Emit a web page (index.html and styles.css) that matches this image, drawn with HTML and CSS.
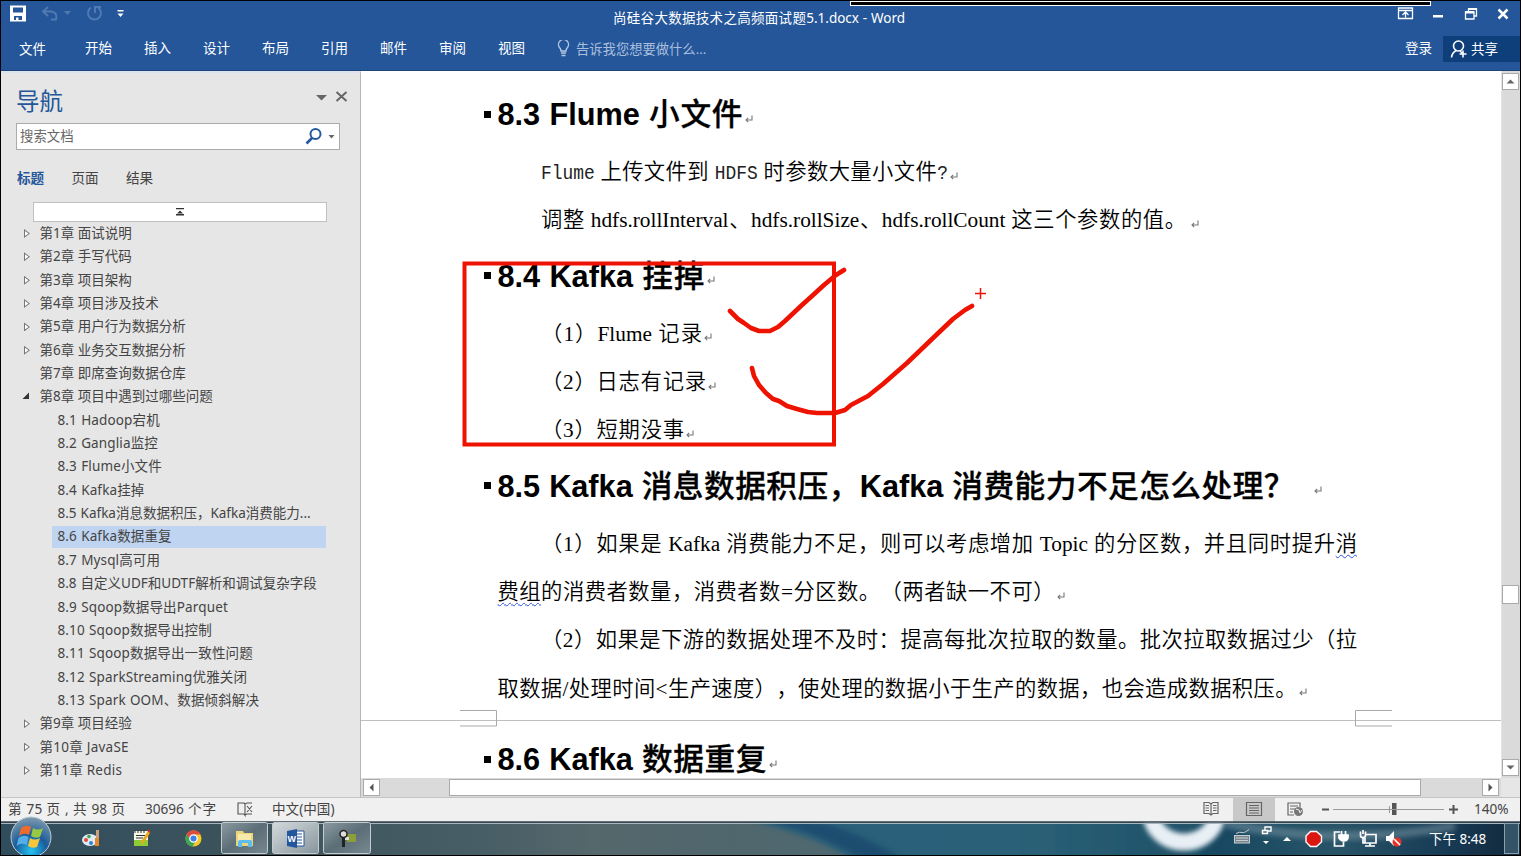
FILE: index.html
```html
<!DOCTYPE html>
<html lang="zh-CN">
<head>
<meta charset="utf-8">
<title>尚硅谷大数据技术之高频面试题5.1.docx - Word</title>
<link rel="stylesheet" href="styles.css">
</head>
<body>
<svg class="defs" width="0" height="0">
  <symbol id="ret" viewBox="0 0 10 10"><path d="M8 1.5V6H2M4.2 3.8 2 6l2.2 2.2" fill="none" stroke="#777" stroke-width="1.1"/></symbol>
</svg>
<div class="app">
  <header class="ribbon">
    <div class="recbar"></div>
    <div class="titlebar">
      <svg class="quick" width="130" height="26" viewBox="0 0 130 26">
        <path d="M9 4.500h16v16H9z" fill="#fff"/><path d="M12 6.500h10v5H12zM13 15h8v4h-8z" fill="#245699"/><path d="M15 16.500h2.500V19H15z" fill="#fff"/>
        <g fill="none" stroke="#5079b3" stroke-width="2"><path d="M47 6l-5 4.500 5 4.500M43 10.500h7q7 1 5 8h-5"/><path d="M97 6.500a6.500 6.500 0 1 1-7 0M94 12V6h6" /></g>
        <path d="M63 10h7l-3.500 4z" fill="#5079b3"/><path d="M116.500 9h6v1.500h-6zM116.500 12.500h6l-3 3.500z" fill="#fff"/>
      </svg>
      <div class="doc-title">尚硅谷大数据技术之高频面试题5.1.docx - Word</div>
      <svg class="winbtns" width="130" height="26" viewBox="1390 0 130 26">
        <g fill="none" stroke="#fff" stroke-width="1.300"><path d="M1398.500 7h14v10.500h-14zM1398.500 9.500h14M1405.500 16.500v-5M1402.500 14l3-3 3 3"/><path d="M1468.500 10.500V8h8v7h-2M1465.500 11h8.500v7h-8.500z"/></g>
        <path d="M1433 14h10v2.500h-10z" fill="#fff"/><path d="M1465 10h9v2.500h-9zM1468 7h9v2h-9z" fill="#fff"/>
        <path d="M1498.500 8.500l9 9m0-9l-9 9" stroke="#fff" stroke-width="2.500"/>
      </svg>
    </div>
    <nav class="tabs">
      <span>文件</span><span>开始</span><span>插入</span><span>设计</span><span>布局</span><span>引用</span><span>邮件</span><span>审阅</span><span>视图</span>
      <div class="tell"><svg width="13" height="17" viewBox="0 0 13 17"><path d="M4 11Q4 9 2.500 7.500a5 5 0 1 1 8 0Q9 9 9 11zM4 13h5M4.500 15.500h4" fill="none" stroke="#b4c7e2" stroke-width="1.400"/></svg>告诉我您想要做什么...</div>
      <span class="login">登录</span>
      <div class="share"><svg width="18" height="20" viewBox="0 0 18 20"><circle cx="8.500" cy="7" r="5" fill="none" stroke="#fff" stroke-width="1.600"/><path d="M1.500 18.500q.5-5 5-7M10 12l2 2M13 11.500v7M9.500 15h7" fill="none" stroke="#fff" stroke-width="1.600"/></svg>共享</div>
    </nav>
  </header>

  <div class="work">
    <aside class="nav">
      <div class="nav-head"><h2>导航</h2>
        <svg width="34" height="14" viewBox="0 0 34 14"><path d="M1 5h11l-5.500 5.500z" fill="#666"/><path d="M21.500 2l10 9m0-9l-10 9" stroke="#666" stroke-width="2"/></svg></div>
      <div class="search"><span>搜索文档</span><svg width="32" height="20" viewBox="0 0 32 20"><circle cx="11.500" cy="7" r="5" fill="none" stroke="#2458a0" stroke-width="2"/><path d="M8 11L2.500 16.500" stroke="#2458a0" stroke-width="2.600"/><path d="M24.500 8h6l-3 3.500z" fill="#666"/></svg></div>
      <div class="nav-tabs"><b>标题</b><span>页面</span><span>结果</span></div>
      <div class="jump"><svg width="10" height="10" viewBox="0 0 10 10"><path d="M1 1h8v1.300H1zM5 3.500L8 6.500H2zM1 7h8v1.500H1z" fill="#333"/></svg></div>
      <ul class="tree">
        <li class="c">第1章 面试说明</li>
        <li class="c">第2章 手写代码</li>
        <li class="c">第3章 项目架构</li>
        <li class="c">第4章 项目涉及技术</li>
        <li class="c">第5章 用户行为数据分析</li>
        <li class="c">第6章 业务交互数据分析</li>
        <li>第7章 即席查询数据仓库</li>
        <li class="o">第8章 项目中遇到过哪些问题</li>
        <li class="s">8.1 Hadoop宕机</li>
        <li class="s">8.2 Ganglia监控</li>
        <li class="s">8.3 Flume小文件</li>
        <li class="s">8.4 Kafka挂掉</li>
        <li class="s tight">8.5 Kafka消息数据积压，Kafka消费能力...</li>
        <li class="s sel">8.6 Kafka数据重复</li>
        <li class="s">8.7 Mysql高可用</li>
        <li class="s tight">8.8 自定义UDF和UDTF解析和调试复杂字段</li>
        <li class="s">8.9 Sqoop数据导出Parquet</li>
        <li class="s">8.10 Sqoop数据导出控制</li>
        <li class="s">8.11 Sqoop数据导出一致性问题</li>
        <li class="s">8.12 SparkStreaming优雅关闭</li>
        <li class="s">8.13 Spark OOM、数据倾斜解决</li>
        <li class="c">第9章 项目经验</li>
        <li class="c js">第10章 JavaSE</li>
        <li class="c js">第11章 Redis</li>
      </ul>
    </aside>

    <div class="view">
      <main class="page">
        <h1><i></i><span class="w245">8.3 Flume <em>小文件</em></span><svg><use href="#ret"/></svg></h1>
        <p class="in"><span class="w407"><tt>Flume</tt> 上传文件到 <tt>HDFS</tt> 时参数大量小文件<tt>?</tt></span><svg><use href="#ret"/></svg></p>
        <p class="in"><span class="w645">调整 hdfs.rollInterval、hdfs.rollSize、hdfs.rollCount 这三个参数的值。</span><svg class="off"><use href="#ret"/></svg></p>
        <h1 class="g1"><i></i><span class="w207">8.4 Kafka <em>挂掉</em></span><svg><use href="#ret"/></svg></h1>
        <p class="in"><span class="w161">（1）Flume 记录</span><svg><use href="#ret"/></svg></p>
        <p class="in"><span class="w165">（2）日志有记录</span><svg><use href="#ret"/></svg></p>
        <p class="in"><span class="w143">（3）短期没事</span><svg><use href="#ret"/></svg></p>
        <h1 class="g1"><i></i><span class="w797">8.5 Kafka <em>消息数据积压，</em>Kafka <em>消费能力不足怎么处理？</em></span><svg class="far"><use href="#ret"/></svg></h1>
        <p class="in"><span class="w816">（1）如果是 Kafka 消费能力不足，则可以考虑增加 Topic 的分区数，并且同时提升<u>消</u></span></p>
        <p><span class="w557"><u>费组</u>的消费者数量，消费者数=分区数。（两者缺一不可）</span><svg><use href="#ret"/></svg></p>
        <p class="in"><span class="w816">（2）如果是下游的数据处理不及时：提高每批次拉取的数量。批次拉取数据过少（拉</span></p>
        <p><span class="w799">取数据/处理时间&lt;生产速度），使处理的数据小于生产的数据，也会造成数据积压。</span><svg><use href="#ret"/></svg></p>
        <svg class="pagebreak" width="1140" height="18" viewBox="361 710 1140 18"><path d="M361 720.500h1140" stroke="#bfbfbf"/><path d="M460 710.500h36.500v15.500H460M1392 710.500h-36.500v15.500h36.500" fill="none" stroke="#aaa"/></svg>
        <h1 class="last"><i></i><span class="w269">8.6 Kafka <em>数据重复</em></span><svg><use href="#ret"/></svg></h1>
      </main>
      <svg class="ink" width="560" height="200" viewBox="455 255 560 200"><g fill="none" stroke="#ee1200" stroke-width="4"><path d="M464.500 263.500h369.500v181H464.500z"/><g stroke-width="4.600" stroke-linecap="round" stroke-linejoin="round"><path d="M730 311l8 8 6 4 7 5 8 3h11l8-4 7-6 17-16 10-9 12-11 12-10 8-5"/><path d="M752 368l2 8 5 9 7 8 7 6 6 2 8 5 10 3 11 3 9 1h18l10-3 6-5 17-9 15-12 24-21 24-23 22-21 12-9 7-4"/></g><path d="M975 293.500h11M980.500 288v11" stroke-width="1.500"/></g></svg>
      <div class="hscroll"><span class="btn"><svg width="15" height="15" viewBox="0 0 15 15"><path d="M9.500 3.500v8L5.500 7.500z" fill="#555"/></svg></span><div class="thumb"></div><span class="btn"><svg width="15" height="15" viewBox="0 0 15 15"><path d="M5.500 3.500v8l4-4z" fill="#555"/></svg></span></div>
    </div>
    <div class="vscroll"><span class="btn"><svg width="15" height="15" viewBox="0 0 15 15"><path d="M3.500 9.500h8l-4-4z" fill="#666"/></svg></span><div class="thumb"></div><span class="btn"><svg width="15" height="15" viewBox="0 0 15 15"><path d="M3.500 5.500h8l-4 4z" fill="#666"/></svg></span></div>
  </div>

  <footer class="status">
    <span class="pg">第 75 页 , 共 98 页</span><span class="wc">30696 个字</span>
    <svg class="proof" width="17" height="16" viewBox="0 0 17 16"><path d="M7 2H1v11h6l1 1.500V3zM8 3l2-1h5M8 14l2-1h5M10 5l5 6m0-6l-5 6" fill="none" stroke="#555" stroke-width="1.100"/></svg>
    <span class="lang">中文(中国)</span>
    <svg class="views" width="265" height="24" viewBox="1195 798 265 24">
      <path d="M1232 798h42v24h-42z" fill="#c8c8c8"/>
      <g fill="none" stroke="#666" stroke-width="1.200"><path d="M1210 804l-2-1.500h-5v11h5l2 1.500 2-1.500h5v-11h-5zv11M1204.500 805.500h3.500M1204.500 808h3.500M1204.500 810.500h3.500M1212 805.500h3.500M1212 808h3.500M1212 810.500h3.500"/><path d="M1245.500 802.500h15v13h-15zM1248 805.500h10M1248 808h10M1248 810.500h10M1248 813h10"/><path d="M1293 815h-6v-12h12v4M1289 806h8M1289 809h5M1289 812h3"/></g>
      <circle cx="1297.500" cy="811.500" r="4.500" fill="#777"/><path d="M1295 809l3 1 1 3 2-3" stroke="#eee" fill="none"/>
      <path d="M1321 808.500h7v2h-7zM1448 808.500h9v2h-9zM1451.500 805h2v9h-2zM1391 803h4.500v12H1391z" fill="#555"/><path d="M1332 809.500h111M1388.500 806v7" stroke="#999"/>
    </svg>
    <span class="zoom">140%</span>
  </footer>

  <footer class="taskbar">
    <svg width="1519" height="39" viewBox="1 816 1519 39">
      <defs>
        <radialGradient id="orb" cx=".5" cy=".85" r=".8"><stop offset="0" stop-color="#25c3f5"/><stop offset=".5" stop-color="#1b5c9b"/><stop offset="1" stop-color="#7795ac"/></radialGradient>
        <linearGradient id="sea"><stop offset="0" stop-color="#304d5d"/><stop offset=".15" stop-color="#3c535c"/><stop offset=".32" stop-color="#485e66"/><stop offset=".39" stop-color="#55686c"/><stop offset=".48" stop-color="#4f666d"/><stop offset=".58" stop-color="#506970"/><stop offset=".65" stop-color="#285b6f"/><stop offset=".74" stop-color="#215268"/><stop offset=".8" stop-color="#174861"/><stop offset=".88" stop-color="#285468"/><stop offset=".95" stop-color="#173b55"/><stop offset="1" stop-color="#12283b"/></linearGradient>
        <linearGradient id="tile" x2="1" y2="1"><stop offset="0" stop-color="#8d9ba2"/><stop offset=".5" stop-color="#5b6d76"/><stop offset="1" stop-color="#788991"/></linearGradient>
        <linearGradient id="hot" x2="1" y2="1"><stop offset="0" stop-color="#d4dadd"/><stop offset="1" stop-color="#87959c"/></linearGradient>
        <linearGradient id="teal"><stop offset="0" stop-color="#29607a"/><stop offset=".6" stop-color="#2b6178"/><stop offset="1" stop-color="#1f5168"/></linearGradient>
        <filter id="soft" x="-20%" y="-50%" width="140%" height="200%"><feGaussianBlur stdDeviation="2.500"/></filter>
        <clipPath id="bar"><path d="M1 822h1519v33H1z"/></clipPath>
      </defs>
      <path d="M1 822h1519v33H1z" fill="url(#sea)"/>
      <g clip-path="url(#bar)"><path d="M740 815h460v50H860q-30-20-60-30t-60-20z" fill="url(#teal)" filter="url(#soft)"/><path d="M750 818q50 10 75 22t45 24h40q-30-20-60-32t-60-14z" fill="#1d4d70" filter="url(#soft)"/><ellipse cx="1184" cy="813" rx="33" ry="29" fill="none" stroke="#e8eff5" stroke-width="17" filter="url(#soft)"/><path d="M1225 823q110 24 230 3" stroke="#7e98a5" stroke-width="9" opacity=".5" fill="none" filter="url(#soft)"/></g>
      <path d="M1 822h1519" stroke="#35444e" stroke-width="1.500"/><path d="M1 823.500h1519" stroke="#a9b5bc"/>
      <circle cx="31" cy="837" r="20" fill="url(#orb)" stroke="#b8cad5"/>
      <path d="M21 828q5-4 10-1l-2 8q-5-3-10 1z" fill="#ee6b2d"/><path d="M33 828q5 3 10 0l-3 9q-5 2-9-1z" fill="#98c943"/><path d="M18.500 838q5-4 10-1l-2 8q-5-3-10 1z" fill="#55aee9"/><path d="M30 838q5 3 10 0l-3 9q-5 2-9-1z" fill="#f7c63b"/>
      <ellipse cx="90" cy="840" rx="8" ry="6" fill="#dcebf5"/><circle cx="86" cy="840" r="2" fill="#dc4b38"/><circle cx="89" cy="836.500" r="1.800" fill="#46a34b"/><circle cx="91" cy="843" r="2" fill="#3281d6"/><path d="M96 830h3v8h-3z" fill="#c9a07a"/><path d="M95 838h4v8h-4z" fill="#e68829"/>
      <path d="M134 831h14v15h-14z" fill="#f5f8e9"/><path d="M134 840h14v6h-14z" fill="#8fcb35"/><path d="M135 830v3m3-3v3m3-3v3m3-3v3M136 835.500h9M136 838h7" stroke="#333"/><path d="M149 832l-7 11" stroke="#e9a820" stroke-width="3"/><path d="M148 830l2 2" stroke="#b33" stroke-width="2"/>
      <circle cx="193.500" cy="838.500" r="8" fill="#f6c828"/><path d="M186.500 834.500a8 8 0 0 1 14 0h-7l-3.500 6z" fill="#df4b3d"/><path d="M186.500 834.500a8 8 0 0 0 6 12l3.500-6h-5z" fill="#3ba755"/><circle cx="193.500" cy="838.500" r="3.700" fill="#3f7fe8" stroke="#fff" stroke-width="1.300"/>
      <g stroke="#c3ccd1"><rect x="221.500" y="822.500" width="46" height="31" rx="2" fill="url(#tile)"/><rect x="272.500" y="822.500" width="46" height="31" rx="2" fill="url(#hot)"/><rect x="323.500" y="822.500" width="47" height="31" rx="2" fill="url(#tile)"/></g>
      <path d="M236 831h7l1 2h9v13h-17z" fill="#eed57c"/><path d="M238 834h13v8h-13z" fill="#f8eaac"/><path d="M238 847v-5q0-2 2-2h10q2 0 2 2v5h-4v-4h-6v4z" fill="#5dbdec"/>
      <path d="M294 831h10v15h-10z" fill="#fff" stroke="#2b579a"/><path d="M296 834h6m-6 3h6m-6 3h6m-6 3h6" stroke="#2b579a"/><path d="M287 831l10-2v19l-10-2z" fill="#24569e"/><text class="word-w" x="287.500" y="842">W</text>
      <path d="M347 834h9v8h-9z" fill="#8c9e38"/><path d="M343 837h6v3h-6z" fill="#ddd"/><circle cx="343.500" cy="834" r="3.500" fill="#ddd" stroke="#222" stroke-width="1.500"/><path d="M342 838h3v9h-3z" fill="#222"/>
      <g fill="none" stroke="#c5cdd1"><rect x="1234.500" y="835.500" width="15" height="7.500" fill="#798890"/><path d="M1236 838h12M1236 840.500h12M1236 833.500q4-2 6-1t7-3"/></g>
      <path d="M1265 830v-3h6v4h-3M1262.500 830.500h5v3h-5z" fill="none" stroke="#fff" stroke-width="1.400"/><path d="M1263 841h6l-3 3zM1283 841h8l-4-4z" fill="#fff"/>
      <path d="M1310.500 831.500h6l5 4.500v6l-5 4.500h-6l-4.500-4.500v-6z" fill="#da1710" stroke="#fff" stroke-width="1.400"/>
      <g fill="none" stroke="#fff" stroke-width="1.700"><path d="M1340 832h-5.500v14h9v-4"/><path d="M1341.500 831v4m4-4v4"/><path d="M1339 835h9v3q-1 3-4 3t-5-3z" fill="#fff"/><path d="M1366 834.500h10v8.500h-11v-5M1370 843v3m-5 0h10M1360.500 831.500v4q0 2 2.500 2t2.500-2v-4M1363 830v4M1363 838v5h3"/></g>
      <path d="M1386 836h3l5-5v15l-5-5h-3z" fill="#fff"/><circle cx="1397" cy="842" r="4.500" fill="#e43326"/><path d="M1394 839l6 6" stroke="#fff" stroke-width="1.600"/>
      <rect x="1504.500" y="823.500" width="14" height="30" fill="#345366" stroke="#8aa1ae"/>
    </svg>
    <span class="clock">下午 8:48</span>
  </footer>
</div>
</body>
</html>
```
FILE: styles.css
```css
* { box-sizing: border-box; }
body { margin: 0; font-family: "Noto Sans", "Noto Sans CJK SC", sans-serif; text-spacing-trim: space-all; }
.defs { position: absolute; }
.app { width: 1521px; height: 856px; border: 1px solid #000; background: #e6e6e6; display: flex; flex-direction: column; overflow: hidden; }

.ribbon { height: 70px; flex: none; background: #245699; border-bottom: 1px solid #1e4579; color: #fff; position: relative; }
.recbar { position: absolute; left: 849px; top: 0; width: 581px; height: 5px; background: #000; border: 1px solid #fff; }
.titlebar { display: flex; height: 29px; justify-content: space-between; }
.doc-title { font-size: 13.5px; line-height: 34px; width: 292px; white-space: nowrap; text-align-last: justify; margin-right: 357px; margin-left: 354px; }
.quick, .winbtns { flex: none; }
.tabs { display: flex; height: 37px; align-items: center; font-size: 13.5px; line-height: 16px; padding-left: 18px; }
.tabs > span { width: 28px; margin-right: 31px; white-space: nowrap; padding-bottom: 1px; }
.tabs > span:first-child { margin-right: 38px; padding-bottom: 0; }
.tell { display: flex; align-items: center; gap: 6px; color: #a9bfdd; width: 157px; white-space: nowrap; font-size: 13.3px; }
.tabs > .login { margin: 0 10px 0 auto; }
.share { background: #0f3f7b; width: 77px; height: 26px; display: flex; align-items: center; padding: 0 0 0 7px; gap: 3px; }

.work { display: flex; height: 726px; flex: none; }
.nav { width: 360px; flex: none; border-right: 1px solid #b5b5b5; border-top: 2px solid #dce3f0; color: #444; display: flex; flex-direction: column; }
.nav-head { display: flex; justify-content: space-between; padding: 11px 11px 0 15px; height: 50px; }
.nav-head h2 { margin: 0; font-weight: 400; font-size: 23.5px; line-height: 34px; color: #245699; }
.nav-head svg { margin-top: 6px; }
.search { margin-left: 15px; width: 324px; height: 27px; border: 1px solid #ababab; background: #fff; display: flex; justify-content: space-between; align-items: center; padding: 0 3px 0 3px; font-size: 13.4px; color: #666; }
.search span { padding-bottom: 3px; }
.nav-tabs { display: flex; margin: 18px 0 0 16px; height: 22px; line-height: 20px; font-size: 13.6px; }
.nav-tabs > * { width: 54.500px; }
.nav-tabs b { color: #245699; }
.jump { margin: 12px 0 0 32px; width: 294px; height: 20px; flex: none; border: 1px solid #c0c0c0; background: #fff; display: flex; align-items: center; justify-content: center; }
.tree { list-style: none; margin: 0; padding: 0 34px 0 21px; font-size: 13.5px; }
.tree li { height: 23.350px; line-height: 22.600px; padding-left: 17.500px; white-space: nowrap; position: relative; }
.tree .s { margin-left: 30px; padding-left: 5.500px; letter-spacing: .14px; word-spacing: .5px; }
.tree .tight { letter-spacing: 0; }
.tree .js { letter-spacing: .25px; }
.tree .sel { background: linear-gradient(#bfd4f1, #bfd4f1) 0 1px / 100% 22px no-repeat; }
.tree .c::before { content: ""; position: absolute; left: 2px; top: 7px; width: 6px; height: 9px; background: #777; clip-path: polygon(0 0, 100% 50%, 0 100%); }
.tree .c::after { content: ""; position: absolute; left: 3px; top: 9px; width: 3.500px; height: 5px; background: #fff; clip-path: polygon(0 0, 100% 50%, 0 100%); }
.tree .o::before { content: ""; position: absolute; left: 0; top: 7px; width: 7px; height: 7px; background: #333; clip-path: polygon(100% 0, 100% 100%, 0 100%); }

.view { width: 1140px; flex: none; position: relative; background: #fff; }
.page { height: 707px; overflow: hidden; padding: 20px 0 0 136.500px; color: #000; }
.page h1, .page p { margin: 0; display: flex; align-items: center; height: 48px; white-space: nowrap; }
.page h1 { font: bold 30.700px/48px "Liberation Sans", "Noto Sans CJK SC", sans-serif; margin-bottom: 9px; }
.page h1 em { font-style: normal; font-weight: 500; -webkit-text-stroke: .3px #000; }
.page h1 i { width: 7px; height: 7px; background: #000; margin: 0 7px 2px -14px; }
.page p { font: 350 21.300px/48px "Liberation Serif", "Noto Sans CJK SC", serif; height: 48.200px; }
.page h1 span, .page p span { text-align-last: justify; flex: none; }
.page .in { padding-left: 43.500px; }
.page tt { font: 17.900px/20px "Liberation Mono", monospace; display: inline-block; transform: translateY(-1px) scaleY(1.18); color: #222; }
.page h1 > svg, .page p > svg { width: 10px; height: 10px; margin: 7px 0 0 1px; }
.page h1 > .far { margin-left: 18px; }
.page p > .off { margin-left: 4px; }
.page u { text-decoration: underline wavy #3355dd 1px; text-underline-offset: 3px; }
.page .g1 { margin-top: 8.500px; }
.pagebreak { display: block; margin: -3px 0 0 -136.500px; }
.page .last { margin-top: 8.500px; }
.w245 { width: 245px; } .w407 { width: 407px; } .w645 { width: 645px; } .w207 { width: 207px; }
.w161 { width: 161px; } .w165 { width: 165px; } .w143 { width: 143px; } .w797 { width: 797px; }
.w816 { width: 816px; } .w557 { width: 557px; } .w799 { width: 799px; } .w269 { width: 269px; }
.ink { position: absolute; left: 94px; top: 183.500px; }

.btn { width: 17px; height: 17px; border: 1px solid #aaa; background: #fff; flex: none; display: block; }
.btn svg { display: block; }
.hscroll { height: 19px; background: #dadada; display: flex; align-items: flex-start; padding: 1px 2px; }
.hscroll .thumb { margin: 0 61px 0 69px; flex: 1; height: 17px; background: #fff; border: 1px solid #aaa; }
.vscroll { width: 19px; flex: none; background: #dadada; border-left: 1px solid #e4e4e4; border-bottom: 19px solid #e6e6e6; display: flex; flex-direction: column; padding: 2px 0 2px 0; }
.vscroll .thumb { width: 17px; height: 19px; background: #fff; border: 1px solid #aaa; margin: 495px 0 auto; }

.status { height: 25px; flex: none; background: #f0f0f0; border-top: 1px solid #c4c4c4; display: flex; align-items: center; font-size: 13.6px; line-height: 20px; color: #444; padding-left: 7px; white-space: nowrap; }
.status span { padding-bottom: 3px; }
.proof { margin-bottom: 3px; }
.pg { width: 117px; text-align-last: justify; }
.wc { width: 71px; margin: 0 21px 0 20px; text-align-last: justify; }
.lang { width: 62px; margin-left: 18px; text-align-last: justify; }
.views { margin-left: auto; }
.zoom { width: 37px; margin: 0 9px 0 13px; }
.taskbar { height: 33px; flex: none; position: relative; }
.taskbar > svg { position: absolute; left: 0; bottom: 0; }
.clock { position: absolute; left: 1428px; top: 6px; font-size: 13.5px; line-height: 22px; color: #fff; }
.word-w { font: bold 9px "Liberation Sans", sans-serif; fill: #fff; }
```
